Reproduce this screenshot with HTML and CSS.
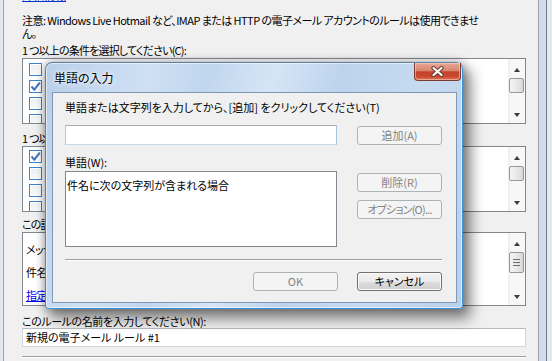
FILE: index.html
```html
<!DOCTYPE html>
<html lang="ja">
<head>
<meta charset="utf-8">
<title>単語の入力</title>
<link rel="stylesheet" href="styles.css">
</head>
<body>
<div class="screen">
  <div class="lframe"></div>
  <div class="client">
    <a class="toplink" href="#">詳細情報</a>
    <p class="note">注意: Windows Live Hotmail など、IMAP または HTTP の電子メール アカウントのルールは使用できませ<br>ん。</p>
    <div class="label l1">1 つ以上の条件を選択してください(C):</div>
    <div class="listbox lb1">
      <div class="items">
        <div class="item"><span class="cb"></span>差出人</div>
        <div class="item"><span class="cb on"><svg width="11" height="11" viewBox="0 0 11 11"><path d="M1.5 5.5 L4.3 8.6 L9.8 1.6" fill="none" stroke="#3f74bd" stroke-width="2"/></svg></span>件名</div>
        <div class="item"><span class="cb"></span>本文</div>
        <div class="item"><span class="cb"></span>宛先</div>
      </div>
      <div class="vscroll">
        <div class="arrow up"></div>
        <div class="track"><div class="thumb"></div></div>
        <div class="arrow down"></div>
      </div>
    </div>
    <div class="label l2">1 つ以上の処理を選択してください(A):</div>
    <div class="listbox lb2">
      <div class="items">
        <div class="item"><span class="cb on"><svg width="11" height="11" viewBox="0 0 11 11"><path d="M1.5 5.5 L4.3 8.6 L9.8 1.6" fill="none" stroke="#3f74bd" stroke-width="2"/></svg></span>移動</div>
        <div class="item"><span class="cb"></span>コピー</div>
        <div class="item"><span class="cb"></span>削除</div>
        <div class="item"><span class="cb"></span>転送</div>
      </div>
      <div class="vscroll">
        <div class="arrow up"></div>
        <div class="track"><div class="thumb"></div></div>
        <div class="arrow down"></div>
      </div>
    </div>
    <div class="label l3">この説明のルールを編集してください(D):</div>
    <div class="listbox lb3">
      <div class="items desc">
        <div>メッセージの到着時</div>
        <div>件名に次の文字列が含まれる場合</div>
        <div><a href="#">指定された単語</a></div>
      </div>
      <div class="vscroll">
        <div class="arrow up"></div>
        <div class="track"><div class="thumb big"><span></span><span></span><span></span></div></div>
        <div class="arrow down"></div>
      </div>
    </div>
    <div class="label l4">このルールの名前を入力してください(N):</div>
    <div class="namebox">新規の電子メール ルール #1</div>
    <div class="sep"></div>
  </div>
  <div class="rframe"></div>

  <div class="dialog">
    <div class="titlebar"><span class="title">単語の入力</span></div>
    <div class="close"><svg width="15" height="11" viewBox="0 0 15 11"><path d="M3.5 2 L11.5 9 M11.5 2 L3.5 9" stroke="#6b3a32" stroke-width="4.2" stroke-linecap="round"/><path d="M3.5 2 L11.5 9 M11.5 2 L3.5 9" stroke="#fbfbfb" stroke-width="2.2" stroke-linecap="round"/></svg></div>
    <div class="dclient">
      <div class="prompt">単語または文字列を入力してから、[追加] をクリックしてください(T)</div>
      <div class="dgrid">
        <div class="dinput"></div>
        <div class="btn dis add">追加(A)</div>
        <div class="dlabel">単語(W):</div>
        <div></div>
        <div class="dlist">件名に次の文字列が含まれる場合</div>
        <div class="btncol">
          <div class="btn dis">削除(R)</div>
          <div class="btn dis opt">オプション(O)...</div>
        </div>
      </div>
      <div class="dsep"></div>
      <div class="dfoot">
        <div class="btn dis">OK</div>
        <div class="btn">キャンセル</div>
      </div>
    </div>
  </div>
</div>
</body>
</html>
```
FILE: styles.css
```css
html, body {
  margin: 0;
  padding: 0;
}
body {
  font-family: "Noto Sans CJK JP", "Liberation Sans", sans-serif;
  font-size: 11px;
  line-height: 13px;
  font-feature-settings: "palt";
  color: #000;
  background: #e4e9ee;
}
.screen {
  position: relative;
  display: flex;
  width: 552px;
  height: 361px;
  overflow: hidden;
}
.lframe {
  width: 3px;
  flex: none;
  background: #e2e8ee;
}
.client {
  width: 536px;
  flex: none;
  box-sizing: border-box;
  border-left: 1px solid #9ea4aa;
  border-right: 1px solid #9ea4aa;
  background: #f0f0f0;
  padding: 0 12px 0 18px;
  overflow: hidden;
}
.rframe {
  flex: 1;
  background: linear-gradient(to right, #d2dde9 0, #d2dde9 7px, #6f7d8c 7px, #6f7d8c 8px, #e4e9ee 8px);
}
.toplink {
  display: block;
  margin-top: -11px;
  color: #0033cc;
  text-decoration: underline;
  width: max-content;
}
.note {
  margin: 12px 0 0;
  white-space: nowrap;
  letter-spacing: -0.55px;
}
.label {
  white-space: nowrap;
  letter-spacing: -0.8px;
}
.l1 { margin-top: 4px; }
.l2 { margin-top: 8px; }
.l3 { margin-top: 6px; }
.l4 { margin-top: 9px; letter-spacing: -0.4px; }

.listbox {
  display: flex;
  box-sizing: border-box;
  border: 1px solid #828790;
  background: #fff;
  margin-top: 1px;
}
.lb1 { height: 66px; }
.lb2 { height: 66px; }
.lb3 { height: 74px; }
.items {
  flex: 1;
  overflow: hidden;
  white-space: nowrap;
}
.lb1 .items { padding-top: 2px; }
.lb2 .items { padding-top: 1px; }
.item {
  height: 17px;
  display: flex;
  align-items: center;
  gap: 4px;
  padding-left: 6px;
}
.cb {
  width: 13px;
  height: 13px;
  box-sizing: border-box;
  flex: none;
  border: 1px solid #3c84cc;
  background: linear-gradient(135deg, #e9eef3, #ffffff);
  box-shadow: inset 0 0 0 1px #ffffff;
  display: flex;
  align-items: center;
  justify-content: center;
}
.cb.on { background: #fff; }
.desc {
  padding: 5px 0 0 3px;
  line-height: 23px;
  letter-spacing: -0.6px;
}
.desc a { color: #0000ee; text-decoration: underline; }

.vscroll {
  width: 17px;
  flex: none;
  display: flex;
  flex-direction: column;
  background: linear-gradient(to right, #ececec, #f7f7f7 3px, #f7f7f7);
}
.arrow {
  height: 17px;
  flex: none;
  display: flex;
  justify-content: center;
  align-items: center;
}
.arrow.up { padding-top: 4px; box-sizing: border-box; }
.arrow.up::before {
  content: "";
  border-left: 3px solid transparent;
  border-right: 3px solid transparent;
  border-bottom: 4px solid #3c3c3c;
}
.arrow.down::before {
  content: "";
  border-left: 3px solid transparent;
  border-right: 3px solid transparent;
  border-top: 4px solid #3c3c3c;
}
.track {
  flex: 1;
  padding: 2px 0 0 0;
}
.thumb {
  box-sizing: border-box;
  height: 15px;
  margin: 0 1px 0 1px;
  border: 1px solid #979797;
  border-radius: 2px;
  background: linear-gradient(to right, #f4f4f4, #e6e6e6 60%, #d8d8d8);
}
.thumb.big {
  height: 21px;
  display: flex;
  flex-direction: column;
  justify-content: center;
  align-items: center;
  gap: 2px;
}
.thumb.big span {
  width: 7px;
  height: 1px;
  background: #6f6f6f;
}
.namebox {
  box-sizing: border-box;
  height: 19px;
  border: 1px solid #d2d6dc;
  border-top-color: #b6bac0;
  background: #fff;
  padding: 2px 3px 0;
  white-space: nowrap;
}
.sep {
  margin-top: 9px;
  border-top: 1px solid #a0a0a0;
  border-bottom: 1px solid #fff;
}

/* dialog */
.dialog {
  position: absolute;
  left: 45px;
  top: 62px;
  width: 418px;
  height: 247px;
  box-sizing: border-box;
  padding: 0 5px 5px 6px;
  display: flex;
  flex-direction: column;
  border: 1px solid #5d7fa3;
  border-right-color: #3d92d8;
  border-bottom-color: #3d92d8;
  border-radius: 7px 7px 4px 4px;
  background: linear-gradient(105deg, #b8cfea 0%, #cfe0f3 22%, #c0d6ee 34%, #d6e5f5 48%, #bdd3ed 62%, #c6dbf0 80%, #b9d0eb 100%);
  box-shadow: 6px 8px 14px 2px rgba(0, 0, 0, 0.45), 0 0 9px 1px rgba(0, 0, 0, 0.25), inset 0 0 0 1px rgba(255, 255, 255, 0.55);
}
.titlebar {
  height: 29px;
  flex: none;
  box-sizing: border-box;
  padding: 8px 0 0 2px;
}
.title {
  font-size: 12px;
  text-shadow: 0 0 6px #fff, 0 0 3px #fff;
}
.close {
  position: absolute;
  top: 0;
  right: 1px;
  width: 47px;
  height: 18px;
  box-sizing: border-box;
  border: 1px solid #7d3a2e;
  border-top: none;
  border-radius: 0 0 4px 4px;
  background: linear-gradient(#e7a898 0%, #d9866f 45%, #c3432b 52%, #c94a2f 80%, #e0765a 100%);
  display: flex;
  align-items: center;
  justify-content: center;
  box-shadow: inset 0 0 0 1px rgba(255, 220, 210, 0.5);
}
.dclient {
  flex: 1;
  box-sizing: border-box;
  border: 1px solid #8098b4;
  background: #f0f0f0;
  padding: 8px 14px 11px 12px;
}
.prompt { white-space: nowrap; }
.dgrid {
  margin-top: 11px;
  display: grid;
  grid-template-columns: 272px 85px;
  grid-template-rows: 20px 26px 76px;
  column-gap: 20px;
}
.dinput {
  box-sizing: border-box;
  border: 1px solid #abadb3;
  border-color: #abadb3 #a9c4e0 #c7d9ec #c2c8d0;
  background: #fff;
}
.dlabel { padding-top: 11px; }
.dlist {
  box-sizing: border-box;
  border: 1px solid #828790;
  background: #fff;
  padding: 7px 1px 0;
  white-space: nowrap;
}
.btn {
  box-sizing: border-box;
  height: 19px;
  width: 85px;
  border: 1px solid #707070;
  border-radius: 3px;
  display: flex;
  align-items: center;
  justify-content: center;
  background: linear-gradient(#f2f2f2 0%, #ebebeb 50%, #dddddd 51%, #cfcfcf 100%);
  box-shadow: inset 0 0 0 1px #fcfcfc;
  white-space: nowrap;
}
.btn.dis {
  border-color: #adb2b5;
  background: #f4f4f4;
  color: #838383;
  box-shadow: none;
}
.btn.opt { letter-spacing: -0.8px; }
.add { margin-top: 1px; }
.btncol {
  display: flex;
  flex-direction: column;
  gap: 8px;
  padding-top: 2px;
}
.dsep {
  margin-top: 12px;
  border-top: 1px solid #a0a0a0;
  border-bottom: 1px solid #fff;
}
.dfoot {
  margin-top: 11px;
  display: flex;
  justify-content: flex-end;
  gap: 19px;
}
```
